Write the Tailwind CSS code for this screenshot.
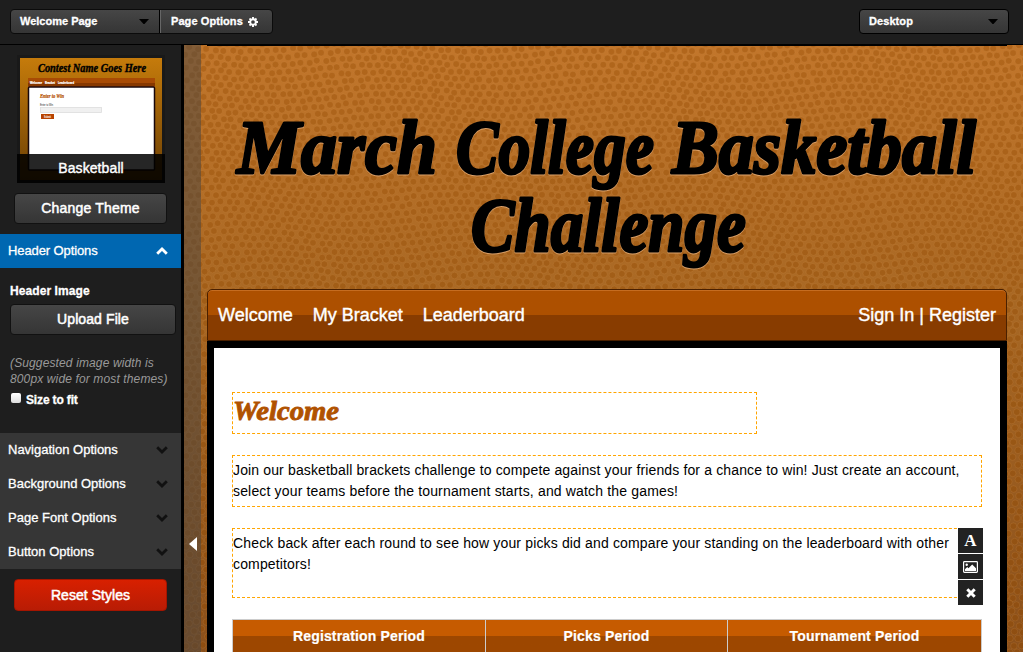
<!DOCTYPE html>
<html lang="en">
<head>
<meta charset="utf-8">
<title>Page Designer</title>
<script src="https://cdn.jsdelivr.net/npm/@tailwindcss/browser@4"></script>
</head>
<body class="w-[1023px] h-[652px] overflow-hidden bg-[#1e1e1e] text-white font-['Liberation_Sans',Arial,sans-serif] flex flex-col">

<header class="h-[45px] shrink-0 border-b border-black flex items-start justify-between pt-[9px] pl-[10px] pr-[14px] text-[11px] font-bold">
  <div class="flex h-[25px] rounded-[4px] border border-[#0b0b0b] bg-linear-to-b from-[#464646] to-[#353535] overflow-hidden">
    <div class="w-[149px] flex items-center justify-between pl-[9px] pr-[10px] border-r border-black">
      <span class="[-webkit-text-stroke:0.3px_white]">Welcome Page</span>
      <svg width="10" height="5" viewBox="0 0 10 5"><path d="M0 0H10L5.500 5H4.500Z" fill="#000"/></svg>
    </div>
    <div class="w-[112px] flex items-center gap-[5px] pl-[10px] border-l border-[#666]">
      <span class="[-webkit-text-stroke:0.3px_white] tracking-[0.08px]">Page Options</span>
      <svg width="10" height="10" viewBox="0 0 10 10" fill="none"><circle cx="5" cy="5" r="2.800" stroke="#fff" stroke-width="1.900"/><path d="M5 0V2M5 8V10M0 5H2M8 5H10M1.500 1.500L2.900 2.900M7.100 7.100L8.500 8.500M8.500 1.500L7.100 2.900M2.900 7.100L1.500 8.500" stroke="#fff" stroke-width="1.900"/></svg>
    </div>
  </div>
  <div class="w-[150px] h-[25px] rounded-[4px] border border-black bg-linear-to-b from-[#464646] to-[#353535] flex items-center justify-between pl-[9px] pr-[10px]">
    <span class="[-webkit-text-stroke:0.3px_white] tracking-[0.08px]">Desktop</span>
    <svg width="10" height="5" viewBox="0 0 10 5"><path d="M0 0H10L5.500 5H4.500Z" fill="#000"/></svg>
  </div>
</header>

<div class="flex flex-1 min-h-0">
  <aside class="w-[184px] shrink-0 border-r-[3px] border-black flex flex-col">
    <div class="relative ml-[17px] mt-[10px] w-[148px] h-[128px] bg-[#191919] pt-[3px] pl-[3px]">
      <svg width="142" height="122" viewBox="0 0 142 122">
        <defs><linearGradient id="thumb" x1="0" y1="0" x2="0" y2="1"><stop offset="0" stop-color="#c57b0b"/><stop offset="1" stop-color="#6b3f04"/></linearGradient></defs>
        <rect width="142" height="125" fill="url(#thumb)"/>
        <text x="18" y="14" textLength="108" lengthAdjust="spacingAndGlyphs" font-family="Liberation Serif, serif" font-weight="bold" font-style="italic" font-size="12.500" stroke="#000" stroke-width=".4">Contest Name Goes Here</text>
        <rect x="8" y="20" width="127" height="9" fill="#a84b05"/>
        <rect x="8" y="25" width="127" height="3" fill="#873800"/>
        <g font-family="Liberation Sans, sans-serif" font-weight="bold" font-size="3.500" fill="#fff" stroke="#fff" stroke-width=".2">
          <text x="10" y="25.500" textLength="12" lengthAdjust="spacingAndGlyphs">Welcome</text>
          <text x="25" y="25.500" textLength="10" lengthAdjust="spacingAndGlyphs">Bracket</text>
          <text x="38" y="25.500" textLength="16" lengthAdjust="spacingAndGlyphs">Leaderboard</text>
        </g>
        <rect x="8.500" y="29" width="126" height="83" rx="1" fill="#fff" stroke="#17070c" stroke-width="1.500"/>
        <text x="20" y="39.500" font-family="Liberation Serif, serif" font-weight="bold" font-style="italic" font-size="5.500" fill="#b55000" stroke="#b55000" stroke-width=".2" textLength="24" lengthAdjust="spacingAndGlyphs">Enter to Win</text>
        <text x="20" y="47.500" font-family="Liberation Sans, sans-serif" font-size="3" fill="#222" textLength="13" lengthAdjust="spacingAndGlyphs">Enter to Win</text>
        <rect x="20.500" y="49.500" width="61" height="5" fill="#f0f0f0" stroke="#ddd" stroke-width=".8"/>
        <rect x="21" y="56" width="13" height="5" fill="#b84300"/>
        <text x="24" y="60" font-family="Liberation Sans, sans-serif" font-weight="bold" font-size="3" fill="#fff" textLength="7" lengthAdjust="spacingAndGlyphs">Submit</text>
      </svg>
      <div class="absolute left-0 bottom-0 w-[148px] h-[29px] bg-black/85 flex items-center justify-center text-[14px] tracking-[0.1px] [-webkit-text-stroke:0.4px_white]">Basketball</div>
    </div>

    <div class="ml-[14px] mt-[10px] w-[153px] h-[31px] rounded-[4px] border border-[#111] bg-linear-to-b from-[#464646] to-[#353535] flex items-center justify-center text-[14px] tracking-[0.2px] [-webkit-text-stroke:0.5px_white]">Change Theme</div>

    <div class="mt-[10px] h-[34px] bg-[#0067b1] flex items-center justify-between pl-[8px] pr-[13px] text-[13px] tracking-[-0.1px]">
      <span class="[-webkit-text-stroke:0.3px_white]">Header Options</span>
      <svg width="12" height="8" viewBox="0 0 12 8" fill="none"><path d="M1.200 6.800L6 2L10.800 6.800" stroke="#fff" stroke-width="2.800"/></svg>
    </div>

    <div class="h-[165px] pl-[10px] pt-[15px] flex flex-col">
      <div class="text-[12px] leading-[16px] font-bold tracking-[0.08px] [-webkit-text-stroke:0.3px_white]">Header Image</div>
      <div class="mt-[5px] w-[166px] h-[31px] rounded-[4px] border border-[#111] bg-linear-to-b from-[#464646] to-[#353535] flex items-center justify-center text-[14px] tracking-[0.1px] [-webkit-text-stroke:0.5px_white]">Upload File</div>
      <div class="mt-[20px] text-[12px] leading-[16px] italic text-[#999] whitespace-nowrap tracking-[0.13px]">(Suggested image width is<br>800px wide for most themes)</div>
      <div class="mt-[5px] flex gap-[5px] text-[12px] leading-[16px] font-bold tracking-[-0.15px]">
        <span class="ml-px mt-[1px] w-[10px] h-[10px] rounded-[2px] bg-linear-to-b from-white to-[#dcdcdc]"></span>
        <span class="[-webkit-text-stroke:0.3px_white]">Size to fit</span>
      </div>
    </div>

    <div class="bg-[#363636] text-[13px] [-webkit-text-stroke:0.3px_white]">
      <div class="h-[34px] flex items-center justify-between pl-[8px] pr-[13px]"><span>Navigation Options</span><svg width="12" height="8" viewBox="0 0 12 8" fill="none"><path d="M1.200 1.200L6 6L10.800 1.200" stroke="#111" stroke-width="2.800"/></svg></div>
      <div class="h-[34px] flex items-center justify-between pl-[8px] pr-[13px]"><span>Background Options</span><svg width="12" height="8" viewBox="0 0 12 8" fill="none"><path d="M1.200 1.200L6 6L10.800 1.200" stroke="#111" stroke-width="2.800"/></svg></div>
      <div class="h-[34px] flex items-center justify-between pl-[8px] pr-[13px]"><span>Page Font Options</span><svg width="12" height="8" viewBox="0 0 12 8" fill="none"><path d="M1.200 1.200L6 6L10.800 1.200" stroke="#111" stroke-width="2.800"/></svg></div>
      <div class="h-[34px] flex items-center justify-between pl-[8px] pr-[13px]"><span>Button Options</span><svg width="12" height="8" viewBox="0 0 12 8" fill="none"><path d="M1.200 1.200L6 6L10.800 1.200" stroke="#111" stroke-width="2.800"/></svg></div>
    </div>

    <div class="ml-[14px] mt-[10px] w-[153px] h-[32px] rounded-[4px] border border-[#a51500] bg-linear-to-b from-[#d82000] to-[#b81c05] flex items-center justify-center text-[14px] tracking-[0.05px] [-webkit-text-stroke:0.5px_white]">Reset Styles</div>
  </aside>

  <main class="relative flex-1 overflow-hidden">
    <svg class="absolute inset-0" width="839" height="607" viewBox="0 0 839 607">
      <defs><linearGradient id="leather" x1="0" y1="0" x2="0" y2="1"><stop offset="0" stop-color="#c2762b"/><stop offset=".42" stop-color="#a86824"/><stop offset="1" stop-color="#8b501b"/></linearGradient></defs>
      <rect width="839" height="607" fill="url(#leather)"/>
      <g id="pebbles" fill="#934a00" fill-opacity=".34" stroke="#e0a060" stroke-opacity=".16" stroke-width="1"></g>
    </svg>

    <div class="relative flex h-[607px]">
      <div class="w-[17px] shrink-0 bg-[#444]/50 flex items-start pt-[492px] pl-[5px]">
        <svg width="8" height="14" viewBox="0 0 8 14"><path d="M8 0V14L0 7Z" fill="#fff"/></svg>
      </div>

      <div class="ml-[6px] w-[800px] shrink-0 flex flex-col">
        <div class="h-[244px] border-t border-black">
          <svg class="[filter:drop-shadow(0.5px_1px_0_rgba(235,180,130,0.75))]" width="800" height="243" viewBox="207 46 800 243" font-family="Liberation Serif, serif" font-weight="bold" font-style="italic" font-size="77" stroke-width="3" stroke-linejoin="round" fill="#000" stroke="#000">
            <text x="237" y="173" textLength="200" lengthAdjust="spacingAndGlyphs">March</text>
            <text x="456" y="173" textLength="198" lengthAdjust="spacingAndGlyphs">College</text>
            <text x="672" y="173" textLength="304" lengthAdjust="spacingAndGlyphs">Basketball</text>
            <text x="471" y="251" textLength="275" lengthAdjust="spacingAndGlyphs">Challenge</text>
          </svg>
        </div>

        <nav class="h-[52px] shrink-0 rounded-t-[5px] border border-[#4a2000] bg-linear-to-b from-[#ad5000] from-50% to-[#883c00] to-50% shadow-[inset_0_1px_0_#c56c20] flex justify-between items-center px-[10px] text-[18px] leading-[20px] [-webkit-text-stroke:0.4px_white]">
          <div class="flex gap-[20px]"><span>Welcome</span><span>My Bracket</span><span>Leaderboard</span></div>
          <div class="whitespace-nowrap">Sign In | Register</div>
        </nav>

        <section class="flex-1 border-black border-x-[7px] border-t-[7px] bg-white text-black pt-[44px] pl-[18px]">
          <div class="w-[525px] h-[42px] border border-dashed border-[#ffa500]">
            <svg width="120" height="40" viewBox="0 0 120 40"><text x="0" y="27" textLength="106" lengthAdjust="spacingAndGlyphs" font-family="Liberation Serif, serif" font-weight="bold" font-style="italic" font-size="28" fill="#b05200" stroke="#b05200" stroke-width=".9">Welcome</text></svg>
          </div>
          <div class="mt-[21px] w-[750px] h-[52px] border border-dashed border-[#ffa500] pt-[4px] text-[14px] leading-[21px] whitespace-nowrap tracking-[0.14px]">Join our basketball brackets challenge to compete against your friends for a chance to win! Just create an account,<br><span class="tracking-[0.16px]">select your teams before the tournament starts, and watch the games!</span></div>
          <div class="relative mt-[21px] w-[750px] h-[70px] border border-dashed border-[#ffa500] pt-[4px] text-[14px] leading-[21px] whitespace-nowrap tracking-[0.15px]">Check back after each round to see how your picks did and compare your standing on the leaderboard with other<br>competitors!
            <div class="absolute -top-px left-[725px] flex flex-col gap-px bg-white">
              <div class="w-[25px] h-[25px] bg-[#222] flex items-center justify-center text-white text-[17px] leading-none font-bold font-['Liberation_Serif',serif] tracking-normal">A</div>
              <div class="w-[25px] h-[25px] bg-[#222] flex items-center justify-center"><svg width="15" height="12" viewBox="0 0 15 12"><rect x=".6" y=".6" width="13.800" height="10.800" rx=".8" fill="none" stroke="#fff" stroke-width="1.200"/><circle cx="3.700" cy="3.700" r="1.200" fill="#fff"/><path d="M2 10V8.200L4.200 6L5.500 7.200L9.200 3.500L13 7.300V10Z" fill="#fff"/></svg></div>
              <div class="w-[25px] h-[25px] bg-[#222] flex items-center justify-center"><svg width="10" height="10" viewBox="0 0 10 10"><path d="M1.300 1.300L8.700 8.700M8.700 1.300L1.300 8.700" stroke="#fff" stroke-width="3"/></svg></div>
            </div>
          </div>
          <div class="mt-[21px] w-[750px] h-[34px] border border-b-0 border-[#ccc] bg-linear-to-b from-[#c65b00] from-50% to-[#9d4700] to-50% grid grid-cols-[253px_242px_253px] text-white text-[14px] font-bold text-center leading-[33px] tracking-[0.15px] [-webkit-text-stroke:0.2px_white]">
            <div class="border-r border-[#ccc]">Registration Period</div>
            <div class="border-r border-[#ccc]">Picks Period</div>
            <div>Tournament Period</div>
          </div>
        </section>
      </div>
    </div>
  </main>
</div>

<script>
  // Pebbled leather: staggered dots whose rows and columns drift gently.
  const group = document.getElementById('pebbles');
  for (let row = 0; row < 90; row++) {
    for (let col = 0; col < 106; col++) {
      const bx = col * 8.400 + (row % 2) * 4.200 - 12, by = row * 7.200 - 12;
      const dot = document.createElementNS('http://www.w3.org/2000/svg', 'circle');
      dot.setAttribute('cx', (bx + Math.sin(by / 31 + bx / 83) * 3 + Math.sin(row * 12.900 + col * 78.200) * .7).toFixed(1));
      dot.setAttribute('cy', (by + Math.sin(bx / 37 - by / 61) * 4 + Math.cos(row * 7.100 + col * 3.700) * .7).toFixed(1));
      dot.setAttribute('r', '3.3');
      group.appendChild(dot);
    }
  }
</script>
</body>
</html>
